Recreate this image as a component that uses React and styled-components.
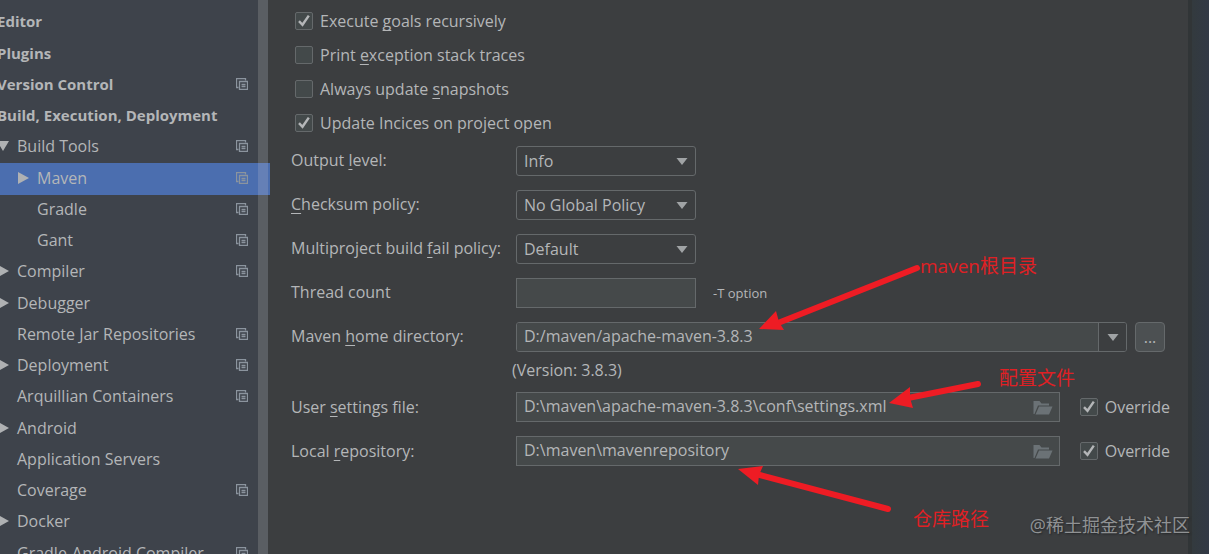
import styled, { createGlobalStyle } from "styled-components";

const GlobalStyle = createGlobalStyle`
  * {
    box-sizing: border-box;
  }

  body {
    margin: 0;
    background: #3c3e40;
    color: #b4b6b8;
    font-family: "Open Sans", "Noto Sans CJK SC", sans-serif;
    font-size: 16px;
    line-height: 20px;
  }

  input, select, button {
    font: inherit;
    color: inherit;
  }
`;

const Page = styled.div`
  position: relative;
  display: flex;
  height: 100vh;
  overflow: hidden;
`;

const Sidebar = styled.nav`
  flex: 0 0 270px;
  overflow: hidden;
  background: linear-gradient(90deg, #3e434b 258px, #5a5e63 258px 268px, transparent 268px);
`;

const Tree = styled.ul`
  list-style: none;
  margin: 0 0 0 -3px;
  padding: 7px 0 0;
`;

const TreeItem = styled.li`
  display: flex;
  align-items: center;
  height: 31px;
  padding: 0 22px 4px ${(p) => p.$level * 20}px;
  font-size: ${(p) => (p.$level === 0 ? 15 : 16)}px;
  font-weight: ${(p) => (p.$level === 0 ? 700 : 400)};
  white-space: nowrap;
  background: ${(p) =>
    p.$selected
      ? "linear-gradient(90deg, #4b6eaf 261px, #6580b6 261px 271px, #4b6eaf 271px)"
      : "none"};

  &:nth-child(4n + 2) {
    height: 32px;
    padding-bottom: 2px;
  }

  > :last-child:not(:first-child) {
    margin-left: auto;
  }
`;

const TreeLabel = styled.span`
  position: relative;
`;

const Marker = styled.svg`
  position: absolute;
  left: -20px;
  top: 4px;
  width: 12px;
  height: 12px;
  fill: #afb1b3;
`;

const Copy = styled.svg`
  flex: none;
  width: 12px;
  height: 12px;
  fill: none;
  stroke: #8b949e;
  stroke-width: 1.3;
`;

const Panel = styled.main`
  flex: 1;
  min-width: 0;
  padding: 6px 18px 0 21px;
`;

const Edge = styled.div`
  flex: 0 0 21px;
  background: linear-gradient(90deg, #313537 4px, #333a3e 4px, #323945 21px);
`;

const CheckList = styled.div`
  display: grid;
  justify-items: start;
  gap: 4px;
  padding-left: 4px;
  margin-bottom: 8px;
`;

const CheckLabel = styled.label`
  display: grid;
  grid-template-columns: 18px auto;
  align-items: center;
  column-gap: 7px;
  height: 30px;
`;

const CheckBox = styled.input`
  grid-area: 1 / 1;
  appearance: none;
  width: 18px;
  height: 18px;
  margin: 0;
  border: 1px solid #65696b;
  border-radius: 2px;
  background: #43494a;
`;

const Tick = styled.svg`
  grid-area: 1 / 1;
  width: 18px;
  height: 18px;
  fill: none;
  stroke: #b4b6b8;
  stroke-width: 2.4;
  pointer-events: none;
`;

const Mnemonic = styled.u`
  text-decoration-thickness: 1px;
  text-decoration-skip-ink: none;
  text-underline-offset: 3px;
`;

const Field = styled.div`
  display: flex;
  align-items: center;
  min-height: 30px;
  margin-bottom: 14px;
`;

const FieldLabel = styled.label`
  flex: 0 0 225px;
  padding-bottom: ${(p) => (p.$file ? 0 : 2)}px;
  white-space: nowrap;
`;

const SelectWrap = styled.div`
  display: grid;
  flex: 0 0 180px;
  align-items: center;
`;

const Select = styled.select`
  grid-area: 1 / 1;
  appearance: none;
  height: 30px;
  padding: 0 28px 0 7px;
  border: 1px solid #65696b;
  border-radius: 3px;
  background: #3c3e40;
`;

const Caret = styled.svg`
  grid-area: 1 / 1;
  justify-self: end;
  width: 12px;
  height: 7px;
  margin-right: 8px;
  fill: #a0a3a5;
  pointer-events: none;
`;

const TextBox = styled.input`
  flex: ${(p) => (p.$short ? "0 0 180px" : "1")};
  width: 100%;
  min-width: 0;
  height: 30px;
  padding: 0 7px 2px;
  border: 1px solid #65696b;
  background: #45494a;
`;

const Hint = styled.span`
  margin-left: 17px;
  font-size: 13px;
`;

const Combo = styled.div`
  display: flex;
  flex: 1;
  min-width: 0;
  height: 30px;
  border: 1px solid #65696b;
  border-radius: 3px;
  overflow: hidden;

  ${TextBox} {
    height: 28px;
    border: 0;
  }
`;

const ComboButton = styled.button`
  display: grid;
  place-items: center;
  flex: 0 0 28px;
  padding: 0;
  border: 0;
  border-left: 1px solid #65696b;
  background: #3c3e40;

  ${Caret} {
    grid-area: auto;
    justify-self: center;
    margin: 0;
  }
`;

const MoreButton = styled.button`
  width: 30px;
  height: 30px;
  margin: 0 5px 0 8px;
  padding: 0;
  border: 1px solid #65696b;
  border-radius: 4px;
  background: #4c5052;
`;

const Version = styled.p`
  margin: -8px 0 10px 221px;
  line-height: 24px;
`;

const FileInput = styled.div`
  display: flex;
  flex: 1;
  align-items: center;
  min-width: 0;
  height: 30px;
  margin-right: 20px;
  border: 1px solid #65696b;
  background: #45494a;

  ${TextBox} {
    height: 28px;
    border: 0;
  }
`;

const FolderButton = styled.button`
  flex: none;
  height: 28px;
  padding: 0 6px;
  border: 0;
  background: none;

  svg {
    display: block;
    fill: #6b7276;
  }
`;

const OverrideSlot = styled.div`
  flex: 0 0 90px;
`;

const Arrows = styled.svg`
  position: absolute;
  left: 0;
  top: 0;
  width: 1209px;
  height: 554px;
  pointer-events: none;
  fill: #ee1c24;
  stroke: #ee1c24;
`;

const Note = styled.div`
  position: absolute;
  left: ${(p) => p.$x}px;
  top: ${(p) => p.$y}px;
  color: #e02024;
  font-size: 19px;
  line-height: 28px;
  white-space: nowrap;
`;

const Watermark = styled.div`
  position: absolute;
  right: 19px;
  bottom: 15px;
  color: #909294;
  font-size: 18px;
  line-height: 28px;
  text-shadow: 1px 1px 2px #222426;
`;

const tree = [
  { label: "Editor", level: 0 },
  { label: "Plugins", level: 0 },
  { label: "Version Control", level: 0, copy: true },
  { label: "Build, Execution, Deployment", level: 0 },
  { label: "Build Tools", level: 1, marker: "open", copy: true },
  { label: "Maven", level: 2, marker: "closed", copy: true, selected: true },
  { label: "Gradle", level: 2, copy: true },
  { label: "Gant", level: 2, copy: true },
  { label: "Compiler", level: 1, marker: "closed", copy: true },
  { label: "Debugger", level: 1, marker: "closed" },
  { label: "Remote Jar Repositories", level: 1, copy: true },
  { label: "Deployment", level: 1, marker: "closed", copy: true },
  { label: "Arquillian Containers", level: 1, copy: true },
  { label: "Android", level: 1, marker: "closed" },
  { label: "Application Servers", level: 1 },
  { label: "Coverage", level: 1, copy: true },
  { label: "Docker", level: 1, marker: "closed" },
  { label: "Gradle-Android Compiler", level: 1, copy: true },
];

// "_" marks the shortcut letter that follows it
function Text({ children }) {
  const at = children.indexOf("_");
  if (at < 0) {
    return <span>{children}</span>;
  }
  return (
    <span>
      {children.slice(0, at)}
      <Mnemonic>{children[at + 1]}</Mnemonic>
      {children.slice(at + 2)}
    </span>
  );
}

function Check({ label, defaultChecked }) {
  return (
    <CheckLabel>
      <CheckBox type="checkbox" checked={!!defaultChecked} readOnly />
      {defaultChecked && (
        <Tick viewBox="0 0 18 18">
          <path d="M4 9.2 L7.5 12.8 L13.8 3.6" />
        </Tick>
      )}
      <Text>{label}</Text>
    </CheckLabel>
  );
}

function Down() {
  return (
    <Caret viewBox="0 0 12 7">
      <path d="M0.5 0H11.5L6 7Z" />
    </Caret>
  );
}

function SelectField({ id, label, value }) {
  return (
    <Field>
      <FieldLabel htmlFor={id}><Text>{label}</Text></FieldLabel>
      <SelectWrap>
        <Select id={id} defaultValue={value}>
          <option>{value}</option>
        </Select>
        <Down />
      </SelectWrap>
    </Field>
  );
}

function FileField({ id, label, value }) {
  return (
    <Field>
      <FieldLabel htmlFor={id} $file><Text>{label}</Text></FieldLabel>
      <FileInput>
        <TextBox id={id} defaultValue={value} />
        <FolderButton aria-label="Browse">
          <svg width="20" height="15" viewBox="0 0 20 15">
            <path d="M0.5 14V1H6.5L8.5 3.5H16V5.5H5L1.5 14Z" />
            <path d="M6 6.5H19.5L16 14.5H2.5Z" />
          </svg>
        </FolderButton>
      </FileInput>
      <OverrideSlot>
        <Check label="Override" defaultChecked />
      </OverrideSlot>
    </Field>
  );
}

export default function App() {
  return (
    <Page>
      <GlobalStyle />
      <Sidebar>
        <Tree>
          {tree.map((item) => (
            <TreeItem key={item.label} $level={item.level} $selected={item.selected}>
              <TreeLabel>
                {item.marker && (
                  <Marker viewBox="0 0 12 12">
                    <path d={item.marker === "open" ? "M0 1H12L6 11Z" : "M1 0L12 6L1 12Z"} />
                  </Marker>
                )}
                {item.label}
              </TreeLabel>
              {item.copy && (
                <Copy viewBox="0 0 12 12">
                  <path d="M2.5 9.5H0.5V0.5H9.5V2.5" />
                  <path d="M3.5 3.5H11.5V11.5H3.5Z" />
                  <path d="M5.5 6.5H9.5M5.5 8.5H9.5" />
                </Copy>
              )}
            </TreeItem>
          ))}
        </Tree>
      </Sidebar>

      <Panel>
        <CheckList>
          <Check label="Execute _goals recursively" defaultChecked />
          <Check label="Print _exception stack traces" />
          <Check label="Always update _snapshots" />
          <Check label="Update Incices on project open" defaultChecked />
        </CheckList>

        <SelectField id="output" label="Output _level:" value="Info" />
        <SelectField id="checksum" label="_Checksum policy:" value="No Global Policy" />
        <SelectField id="fail" label="Multiproject build _fail policy:" value="Default" />
        <Field>
          <FieldLabel htmlFor="threads">Thread count</FieldLabel>
          <TextBox id="threads" $short />
          <Hint>-T option</Hint>
        </Field>
        <Field>
          <FieldLabel htmlFor="home"><Text>Maven _home directory:</Text></FieldLabel>
          <Combo>
            <TextBox id="home" defaultValue="D:/maven/apache-maven-3.8.3" />
            <ComboButton aria-label="Show homes"><Down /></ComboButton>
          </Combo>
          <MoreButton>...</MoreButton>
        </Field>
        <Version>(Version: 3.8.3)</Version>
        <FileField id="settings" label="User _settings file:" value="D:\maven\apache-maven-3.8.3\conf\settings.xml" />
        <FileField id="repository" label="Local _repository:" value="D:\maven\mavenrepository" />
      </Panel>
      <Edge />

      <Arrows viewBox="0 0 1209 554">
        <path strokeWidth="6" strokeLinecap="round" d="M917 268L778 323M978 384L908 398M888 509L756 474" />
        <path stroke="none" d="M759 329L776 311L779 322L784 330Z" />
        <path stroke="none" d="M889 403L910 387L910 398L913 408Z" />
        <path stroke="none" d="M738 469L763 466L759 475L758 485Z" />
      </Arrows>
      <Note $x={920} $y={252}>maven根目录</Note>
      <Note $x={999} $y={364}>配置文件</Note>
      <Note $x={913} $y={505}>仓库路径</Note>
      <Watermark>@稀土掘金技术社区</Watermark>
    </Page>
  );
}
